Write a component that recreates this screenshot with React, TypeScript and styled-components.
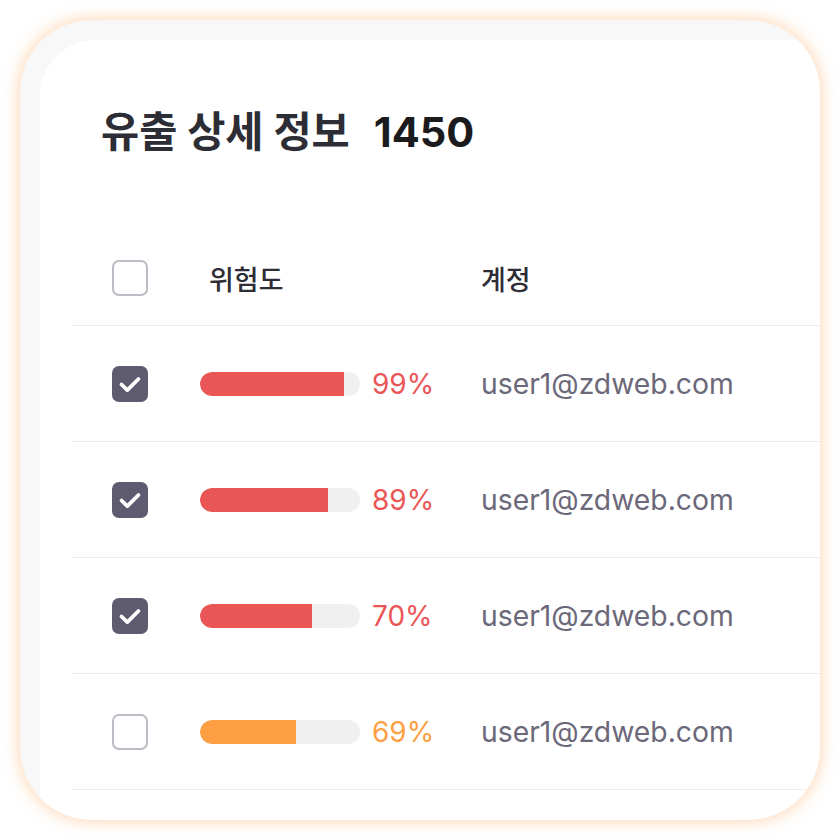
import React from 'react';
import styled, { createGlobalStyle } from 'styled-components';

const GlobalStyle = createGlobalStyle`
    html, body {
        margin: 0;
        padding: 0;
        background: #ffffff;
    }
    body {
        font-family: Inter, "Noto Sans CJK KR", sans-serif;
    }
`;

const Page = styled.div`
    width: 840px;
    height: 840px;
    padding: 20px;
    box-sizing: border-box;
`;

const Frame = styled.div`
    width: 800px;
    height: 800px;
    border-radius: 72px;
    background: #f8f8f9;
    overflow: hidden;
    box-shadow: 0 0 14px 3px rgba(255, 190, 130, 0.5);
    display: flex;
`;

const Panel = styled.div`
    margin: 20px 0 0 20px;
    flex: 0 0 860px;
    background: #ffffff;
    border-top-left-radius: 56px;
    padding-top: 70px;
`;

const Title = styled.h2`
    margin: 0 0 0 61px;
    font-size: 41.5px;
    line-height: 44px;
    font-weight: 700;
    color: #2d2d35;
    display: flex;
    gap: 24px;
`;

const Count = styled.span`
    color: #1b1b1d;
`;

const Table = styled.div`
    margin: 77px 0 0 32px;
`;

const Row = styled.div<{ $head?: boolean }>`
    display: grid;
    grid-template-columns: 128px 281px 1fr;
    align-items: center;
    height: ${p => (p.$head ? 94 : 115)}px;
    border-bottom: 1px solid #eeeeef;
`;

const CheckCell = styled.div`
    padding-left: 40px;
    display: flex;
`;

const Box = styled.div<{ $checked?: boolean }>`
    width: 36px;
    height: 36px;
    box-sizing: border-box;
    border-radius: 7px;
    border: ${p => (p.$checked ? 'none' : '2px solid #bdbcc4')};
    background: ${p => (p.$checked ? '#5e5b70' : '#ffffff')};
    display: flex;
    align-items: center;
    justify-content: center;
`;

const HeadLabel = styled.div<{ $indent?: number }>`
    padding-left: ${p => p.$indent || 0}px;
    font-size: 27px;
    font-weight: 500;
    color: #2e2d35;
`;

const Risk = styled.div`
    display: flex;
    align-items: center;
    gap: 12px;
`;

const Track = styled.div`
    width: 160px;
    height: 24px;
    border-radius: 12px;
    background: #f0f0f0;
    overflow: hidden;
`;

const Fill = styled.div<{ $color: string }>`
    height: 100%;
    background: ${p => p.$color};
    border-radius: 12px 0 0 12px;
`;

const Percent = styled.span<{ $color: string }>`
    font-size: 28px;
    color: ${p => p.$color};
`;

const Email = styled.div`
    font-size: 28.3px;
    color: #6b6879;
`;

const RED = '#ea5556';
const ORANGE = '#fd9f42';

const rows = [
    { pct: 99, bar: 144, checked: true, color: RED },
    { pct: 89, bar: 128, checked: true, color: RED },
    { pct: 70, bar: 112, checked: true, color: RED },
    { pct: 69, bar: 96, checked: false, color: ORANGE },
];

const Check = () => (
    <svg width="36" height="36" viewBox="0 0 36 36">
        <path
            d="M9.5 18.5l5.8 5.6L26.5 13"
            fill="none"
            stroke="#ffffff"
            strokeWidth="3.8"
            strokeLinecap="round"
            strokeLinejoin="round"
        />
    </svg>
);

const App = () => (
    <Page>
        <GlobalStyle />
        <Frame>
            <Panel>
                <Title>
                    <span>유출 상세 정보</span>
                    <Count>1450</Count>
                </Title>
                <Table>
                    <Row $head>
                        <CheckCell>
                            <Box />
                        </CheckCell>
                        <HeadLabel $indent={9}>위험도</HeadLabel>
                        <HeadLabel>계정</HeadLabel>
                    </Row>
                    {rows.map((r, i) => (
                        <Row key={i}>
                            <CheckCell>
                                <Box $checked={r.checked}>{r.checked && <Check />}</Box>
                            </CheckCell>
                            <Risk>
                                <Track>
                                    <Fill $color={r.color} style={{ width: r.bar }} />
                                </Track>
                                <Percent $color={r.color}>{r.pct}%</Percent>
                            </Risk>
                            <Email>user1@zdweb.com</Email>
                        </Row>
                    ))}
                </Table>
            </Panel>
        </Frame>
    </Page>
);

export default App;
